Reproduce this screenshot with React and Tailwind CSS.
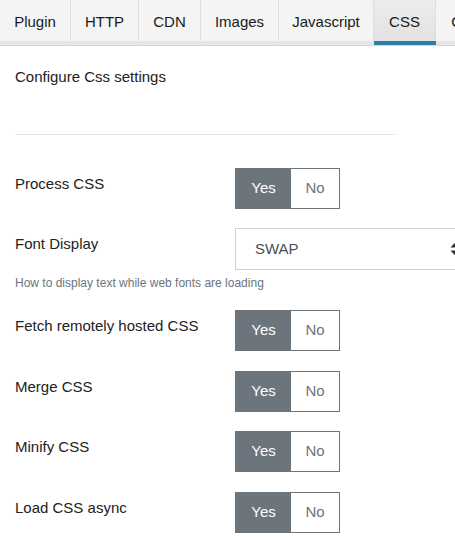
import React from 'react';

const tabs = [
  { name: 'Plugin', w: 'w-[71px]' },
  { name: 'HTTP', w: 'w-[68px]' },
  { name: 'CDN', w: 'w-[62px]' },
  { name: 'Images', w: 'w-[78px]' },
  { name: 'Javascript', w: 'w-[95px]' },
  { name: 'CSS', w: 'w-[62px]', active: true },
  { name: 'Compression', w: 'w-[120px]' },
];

const Toggle = () => (
  <div className="flex h-[41px] w-[105px] border border-[#6c747c] text-[15px]">
    <div className="flex w-[55px] items-center justify-center bg-[#6c747c] text-white">Yes</div>
    <div className="flex flex-1 items-center justify-center bg-white text-[#6c757d]">No</div>
  </div>
);

const Row = ({ label, children, className = '' }) => (
  <div className={`flex ${className}`}>
    <div className="w-[220px] shrink-0 pt-[6px] leading-[20px] text-[#222]">{label}</div>
    {children}
  </div>
);

export default function App() {
  return (
    <div className="min-h-screen overflow-hidden bg-white text-[15px]" style={{ fontFamily: '"Liberation Sans", Arial, sans-serif' }}>
      {/* tab bar */}
      <div className="flex h-[46px] border-b border-[#d6d6d6] bg-[#e6e6e6]">
        {tabs.map(t => (
          <div key={t.name} className={`${t.w} relative h-[41px] shrink-0 border-r border-[#dedede] ${t.active ? 'bg-gradient-to-b from-[#ececec] to-[#e2e2e2]' : 'bg-[#f4f4f4]'}`}>
            <div className="flex h-full items-center justify-center pt-[4px] text-[#1a1a1a]">{t.name}</div>
            {t.active && <div className="absolute left-0 right-[-1px] top-[41px] h-[4px] bg-[#2d7fa9]"></div>}
          </div>
        ))}
      </div>

      <div className="px-[15px]">
        <p className="mt-[21px] leading-[20px] text-[#222]">Configure Css settings</p>
        <div className="mt-[47px] h-px w-[380px] bg-[#e5e5e5]"></div>

        <div className="mt-[33px]">
          <Row label="Process CSS"><Toggle /></Row>
        </div>

        <div className="mt-[19px]">
          <Row label="Font Display">
            <div className="flex h-[42px] w-[232px] shrink-0 items-center justify-between border border-[#ccd0d6] pl-[19px] pr-[7px] text-[#495057]">
              <span>SWAP</span>
              <svg width="9" height="14" viewBox="0 0 9 14" fill="#333">
                <path d="M4.5 1 L8.5 5.5 H0.5 Z" />
                <path d="M4.5 13 L8.5 8.5 H0.5 Z" />
              </svg>
            </div>
          </Row>
          <p className="mt-[5px] text-[12px] leading-[16px] text-[#6c757d]">How to display text while web fonts are loading</p>
        </div>

        <div className="mt-[19px]">
          <Row label="Fetch remotely hosted CSS"><Toggle /></Row>
          <Row label="Merge CSS" className="mt-[20px]"><Toggle /></Row>
          <Row label="Minify CSS" className="mt-[19px]"><Toggle /></Row>
          <Row label="Load CSS async" className="mt-[20px]"><Toggle /></Row>
        </div>
      </div>
    </div>
  );
}
